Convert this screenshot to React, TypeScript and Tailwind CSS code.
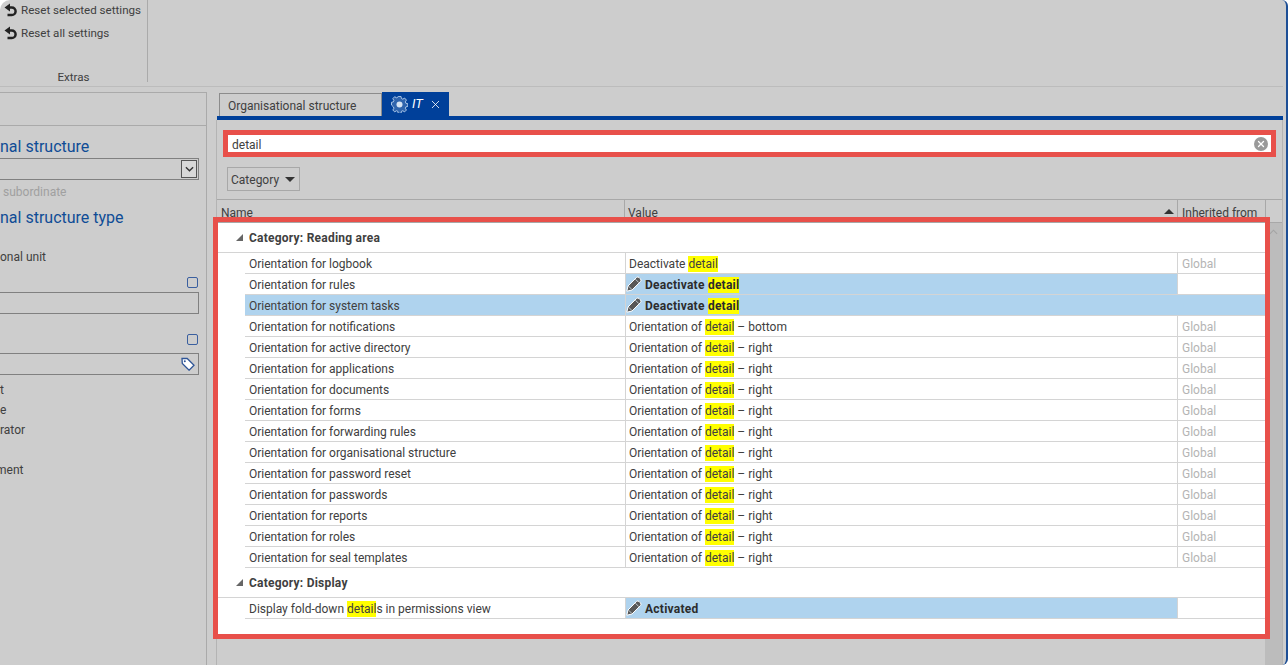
import { X } from "lucide-react";

interface Row {
    name: React.ReactNode;
    value: React.ReactNode;
    inherited?: boolean;
    edited?: "value" | "row";
}

const Mark: React.FC<{ children: React.ReactNode }> = ({ children }) => (
    <span className="bg-[#ffff00] py-[1px]">{children}</span>
);

const Pencil = () => (
    <svg viewBox="0 0 16 16" className="w-[16px] h-[16px] shrink-0">
        <path d="M0.800 15.200 2 10 10.400 1.600a2 2 0 0 1 2.800 0l1.200 1.200a2 2 0 0 1 0 2.800L6 14z" fill="#585858" stroke="#ffffff" strokeWidth="1" />
        <path d="M9.400 3.200 12.800 6.600M2.600 10.200 5.800 13.400" stroke="#d8e4ee" strokeWidth="0.800" />
    </svg>
);

const UndoIcon = () => (
    <svg viewBox="0 0 14 14" className="w-[14px] h-[14px] shrink-0">
        <path d="M0.500 4.500 6 0.500V8.500z" fill="#222222" />
        <path d="M5 4.500h2.800a3.800 3.800 0 0 1 0 7.600H3.500" fill="none" stroke="#222222" strokeWidth="2.500" />
    </svg>
);

const Gear = () => (
    <svg viewBox="0 0 18 18" className="w-[17px] h-[17px] shrink-0">
        <path d="M7.500 1h3l.5 2.300 1.500.7 2-1.200 2 2.200-1.200 2 .6 1.500 2.100.5v3l-2.100.5-.6 1.500 1.200 2-2 2-2-1.200-1.500.6-.5 2.300h-3l-.5-2.300-1.500-.6-2 1.200-2-2 1.200-2-.6-1.500L0 10.500v-3l2.100-.5.600-1.500-1.200-2 2-2.200 2 1.200 1.500-.7z" transform="translate(0.500 -0.500) scale(0.96)" fill="#2f64ad" stroke="#b9d2ee" strokeWidth="1" />
        <circle cx="9" cy="9" r="3.200" fill="#d5e3f3" />
    </svg>
);

const TagIcon = () => (
    <svg viewBox="0 0 14 14" className="w-[14px] h-[14px]">
        <path d="M1 1.500h5.200l6.800 6.800-4.900 4.900L1.300 6.500z" fill="#ffffff" stroke="#2f5597" strokeWidth="1.300" />
        <circle cx="3.800" cy="4.200" r="1" fill="#2f5597" />
    </svg>
);

const orientation = (suffix: string) => <>Orientation of <Mark>detail</Mark> – {suffix}</>;

const readingRows: Row[] = [
    { name: "Orientation for logbook", value: <>Deactivate <Mark>detail</Mark></>, inherited: true },
    { name: "Orientation for rules", value: <>Deactivate <Mark>detail</Mark></>, edited: "value" },
    { name: "Orientation for system tasks", value: <>Deactivate <Mark>detail</Mark></>, edited: "row" },
    { name: "Orientation for notifications", value: orientation("bottom"), inherited: true },
    { name: "Orientation for active directory", value: orientation("right"), inherited: true },
    { name: "Orientation for applications", value: orientation("right"), inherited: true },
    { name: "Orientation for documents", value: orientation("right"), inherited: true },
    { name: "Orientation for forms", value: orientation("right"), inherited: true },
    { name: "Orientation for forwarding rules", value: orientation("right"), inherited: true },
    { name: "Orientation for organisational structure", value: orientation("right"), inherited: true },
    { name: "Orientation for password reset", value: orientation("right"), inherited: true },
    { name: "Orientation for passwords", value: orientation("right"), inherited: true },
    { name: "Orientation for reports", value: orientation("right"), inherited: true },
    { name: "Orientation for roles", value: orientation("right"), inherited: true },
    { name: "Orientation for seal templates", value: orientation("right"), inherited: true },
];

const displayRows: Row[] = [
    { name: <>Display fold-down <Mark>detail</Mark>s in permissions view</>, value: "Activated", edited: "value" },
];

const SettingRow: React.FC<{ row: Row }> = ({ row }) => (
    <div className="pl-[28px]">
        <div className={`flex h-[21px] items-center border-b border-[#d4d4d4] ${row.edited === "row" ? "bg-[#afd3ee]" : ""}`}>
            <div className="w-[380px] pl-1 pt-[2px] shrink-0 whitespace-nowrap">{row.name}</div>
            <div className={`h-full flex-1 flex items-center border-l border-[#d4d4d4] ${row.edited ? "bg-[#afd3ee] font-bold text-[#2c2c2c] tracking-[0.25px]" : "pl-[3px]"}`}>
                {row.edited && <span className="w-[19px] flex justify-start"><Pencil /></span>}
                <span className="pt-[2px]">{row.value}</span>
            </div>
            <div className={`h-full w-[88px] shrink-0 pl-1 pt-[2px] flex items-center text-[#b4b4b4] ${row.edited === "row" ? "" : "border-l border-[#d4d4d4]"}`}>
                {row.inherited && "Global"}
            </div>
        </div>
    </div>
);

const CategoryHeader: React.FC<{ label: string }> = ({ label }) => (
    <div className="h-[30px] flex items-center border-b border-[#d4d4d4] pl-[19px] font-bold tracking-[0.23px]">
        <span className="w-0 h-0 border-l-[7px] border-l-transparent border-b-[7px] border-b-[#666] mr-[6px]" />
        <span>{label}</span>
    </div>
);

const SideCheck = () => (
    <div className="flex justify-end pr-2 h-[11px]">
        <span className="w-[11px] h-[11px] rounded-[2px] border border-[#3a5f9f]" />
    </div>
);

const App: React.FC = () => {
    return (
        <div className="w-[1288px] h-[665px] bg-white overflow-hidden font-['Roboto',sans-serif] text-[12px] text-[#404040]">
            <div className="w-full h-full flex flex-col bg-[#cdcdcd] rounded-tl-[10px] rounded-tr-[6px] rounded-br-[6px] overflow-hidden border-r-[2px] border-[#1d4f96] pr-[3px]">

                {/* ribbon */}
                <div className="h-[87px] shrink-0 border-b border-[#bcbcbc] flex">
                    <div className="w-[148px] h-[82px] border-r border-[#aaaaaa] flex flex-col text-[11.6px]">
                        <div className="flex items-center gap-[3px] pl-[4px] h-[20px] whitespace-nowrap"><UndoIcon /><span className="pt-[1px]">Reset selected settings</span></div>
                        <div className="flex items-center gap-[3px] pl-[4px] h-[20px] mt-[3px] whitespace-nowrap"><UndoIcon /><span className="pt-[1px]">Reset all settings</span></div>
                        <div className="mt-auto -mb-[4px] text-center">Extras</div>
                    </div>
                </div>

                <div className="flex-1 flex min-h-0 pt-[5px]">

                    {/* left panel */}
                    <div className="w-[207px] shrink-0 border-r border-[#aaaaaa] border-t flex flex-col">
                        <div className="h-[33px] shrink-0 border-b border-[#aaaaaa]" />
                        <div className="text-[16px] leading-[20px] text-[#0f4c96] mt-[11px] whitespace-nowrap">nal structure</div>
                        <div className="mt-[1px] mr-[7px] h-[22px] border border-[#808080] border-l-0 flex justify-end items-center pr-[1px]">
                            <span className="w-[16px] h-[18px] border border-[#555] bg-[#d8d8d8] flex items-center justify-center">
                                <svg viewBox="0 0 10 6" className="w-[9px] h-[6px]"><path d="M1 1l4 4 4-4" fill="none" stroke="#333" strokeWidth="1.500" /></svg>
                            </span>
                        </div>
                        <div className="mt-[4px] pl-[3px] h-[16px] leading-[16px] text-[#a0a0a0] whitespace-nowrap">subordinate</div>
                        <div className="text-[16px] leading-[20px] text-[#0f4c96] mt-[8px] whitespace-nowrap">nal structure type</div>
                        <div className="mt-[21px] h-[16px] leading-[16px]">onal unit</div>
                        <div className="mt-[12px]"><SideCheck /></div>
                        <div className="mt-[4px] mr-[7px] h-[22px] border border-[#808080] border-l-0" />
                        <div className="mt-[20px]"><SideCheck /></div>
                        <div className="mt-[8px] mr-[7px] h-[22px] border border-[#808080] border-l-0 flex justify-end items-center pr-[3px]"><TagIcon /></div>
                        <div className="mt-[5px] h-[20px] leading-[20px]">t</div>
                        <div className="h-[20px] leading-[20px]">e</div>
                        <div className="h-[20px] leading-[20px]">rator</div>
                        <div className="h-[20px]" />
                        <div className="h-[20px] leading-[20px] -ml-[4px]">ment</div>
                    </div>

                    {/* right side */}
                    <div className="flex-1 min-w-0 flex flex-col pl-[10px]">
                        <div className="h-[24px] shrink-0 flex pl-[2px] items-end">
                            <div className="w-[163px] h-[23px] border border-b-0 border-[#8c8c8c] pl-[8px] pt-[1px] flex items-center whitespace-nowrap">Organisational structure</div>
                            <div className="w-[67px] h-[24px] bg-[#00409a] text-white flex items-center pl-[9px] gap-[4px]">
                                <Gear />
                                <span className="italic text-[13px]">IT</span>
                                <X className="w-[13px] h-[13px] ml-[2px]" strokeWidth={1.5} />
                            </div>
                        </div>
                        <div className="h-[4px] shrink-0 bg-[#00409a]" />

                        <div className="-ml-px flex-1 min-h-0 flex flex-col border-l border-r border-[#b4b4b4]">
                            <div className="relative mt-[15px] mx-[11px] h-[17px] shrink-0 bg-white flex items-center pl-[4px] pr-[3px] justify-between">
                                <span className="pt-[2px]">detail</span>
                                <span className="w-[14px] h-[14px] rounded-full bg-[#9a9a9a] flex items-center justify-center">
                                    <X className="w-[10px] h-[10px] text-white" strokeWidth={3} />
                                </span>
                                <div className="absolute -inset-[5px] border-[5px] border-[#e8504a]" />
                            </div>

                            <div className="mt-[15px] ml-[10px] w-[73px] h-[24px] shrink-0 border border-[#a8a8a8] flex items-center pl-[3px] gap-[6px]">
                                <span className="pt-[2px]">Category</span>
                                <span className="w-0 h-0 border-x-[5px] border-x-transparent border-t-[5px] border-t-[#333]" />
                            </div>

                            <div className="mt-[8px] flex-1 min-h-0 flex flex-col">
                                <div className="h-[24px] shrink-0 border-t border-[#a8a8a8] border-b flex">
                                    <div className="w-[408px] pl-1 pt-[4px] border-r border-[#a8a8a8]">Name</div>
                                    <div className="w-[553px] pl-[3px] pt-[4px] border-r border-[#a8a8a8] relative">
                                        Value
                                        <span className="absolute right-[3px] top-[9px] w-0 h-0 border-x-[5px] border-x-transparent border-b-[5px] border-b-[#333]" />
                                    </div>
                                    <div className="w-[88px] pl-1 pt-[4px] border-r border-[#a8a8a8] whitespace-nowrap">Inherited from</div>
                                </div>

                                <div className="flex-1 min-h-0 flex">
                                    <div className="relative w-[1048px] shrink-0 flex flex-col h-[416px]">
                                        <div className="flex-1 bg-white">
                                            <CategoryHeader label="Category: Reading area" />
                                            {readingRows.map((row, i) => <SettingRow key={i} row={row} />)}
                                            <CategoryHeader label="Category: Display" />
                                            {displayRows.map((row, i) => <SettingRow key={i} row={row} />)}
                                        </div>
                                        <div className="absolute -left-[4px] -right-[5px] -top-[6px] bottom-0 border-[5px] border-[#e8504a]" />
                                    </div>
                                    <div className="flex-1 bg-[#bcbcbc] flex justify-center pt-[6px]">
                                        <svg viewBox="0 0 10 6" className="w-[9px] h-[6px]"><path d="M1 5l4-4 4 4" fill="none" stroke="#a4a4a4" strokeWidth="1.200" /></svg>
                                    </div>
                                </div>
                            </div>
                        </div>
                    </div>
                </div>
            </div>
        </div>
    );
};

export default App;
